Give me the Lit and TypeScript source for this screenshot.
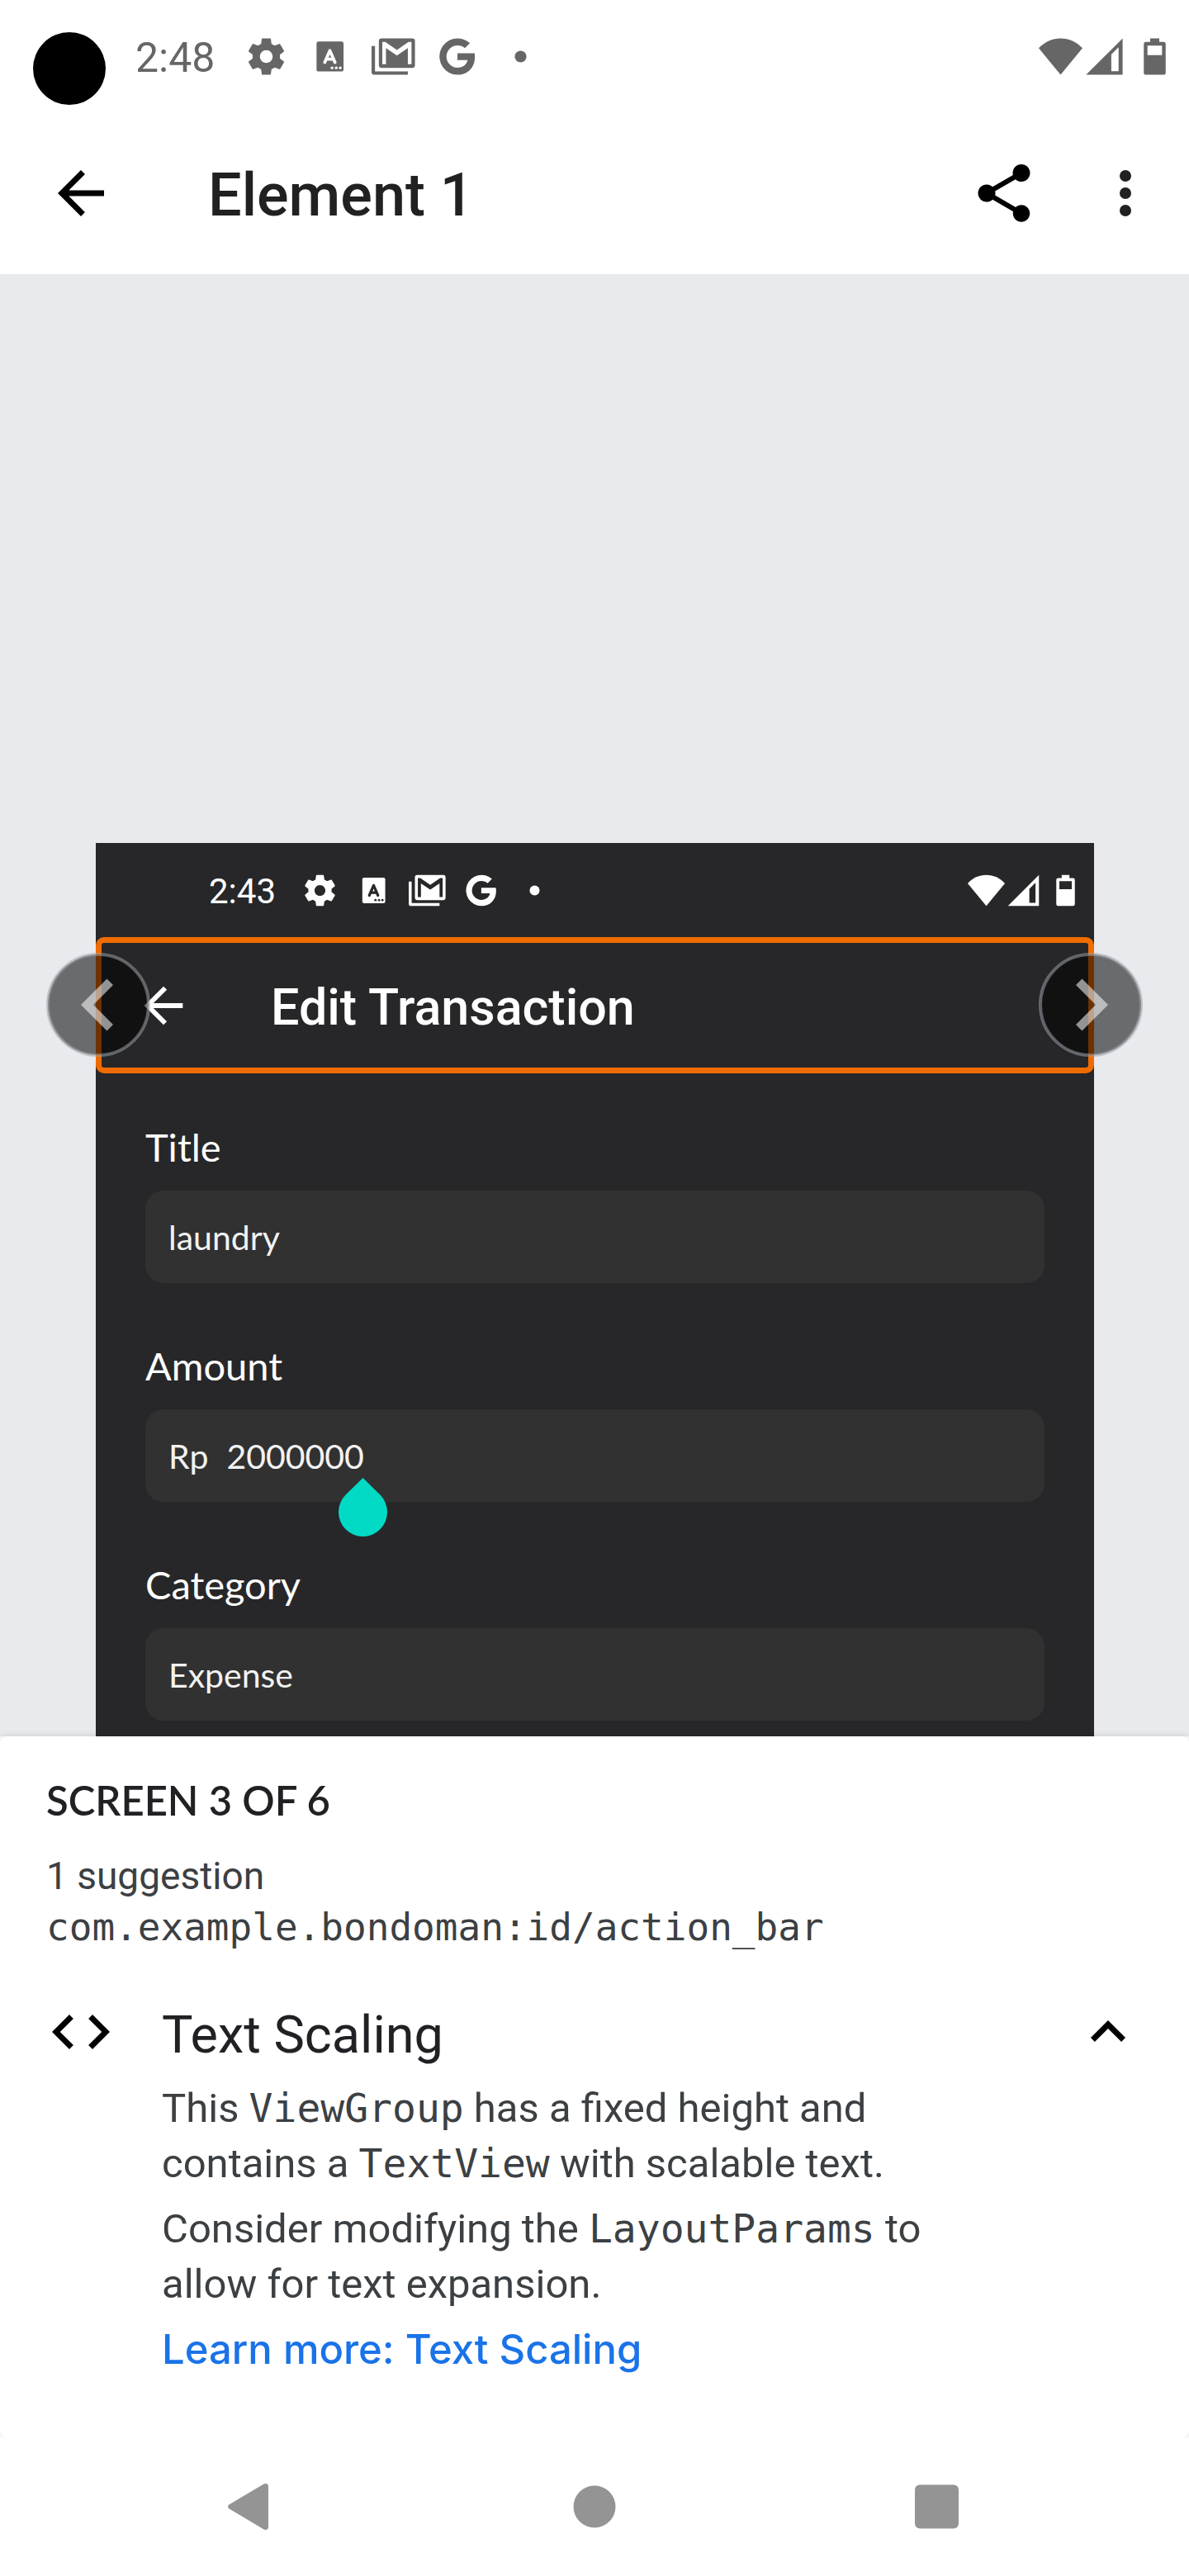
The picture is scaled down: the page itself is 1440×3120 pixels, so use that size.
import { LitElement, html, svg, css } from "lit";
import { customElement, property, state } from "lit/decorators.js";

const icons = {
  back: svg`<path d="M20 11H7.83l5.59-5.59L12 4l-8 8 8 8 1.41-1.41L7.83 13H20z"/>`,
  share: svg`<path d="M18 16.08c-.76 0-1.44.3-1.96.77L8.91 12.7c.05-.23.09-.46.09-.7s-.04-.47-.09-.7l7.05-4.11c.54.5 1.25.81 2.04.81 1.66 0 3-1.34 3-3s-1.34-3-3-3-3 1.34-3 3c0 .24.04.47.09.7L8.04 9.81C7.5 9.31 6.79 9 6 9c-1.66 0-3 1.34-3 3s1.34 3 3 3c.79 0 1.5-.31 2.04-.81l7.12 4.16c-.05.21-.08.43-.08.65 0 1.61 1.31 2.92 2.92 2.92s2.92-1.31 2.92-2.92-1.31-2.92-2.92-2.92z"/>`,
  more: svg`<circle cx="12" cy="6" r="2"/><circle cx="12" cy="12" r="2"/><circle cx="12" cy="18" r="2"/>`,
  code: svg`<path d="M9.4 16.6 4.8 12l4.6-4.6L8 6l-6 6 6 6zM14.6 16.6l4.6-4.6-4.6-4.6L16 6l6 6-6 6z"/>`,
  less: svg`<path d="M12 8l-6 6 1.41 1.41L12 10.83l4.59 4.58L18 14z"/>`,
  expand: svg`<path d="M16.59 8.59 12 13.17 7.41 8.59 6 10l6 6 6-6z"/>`,
  settings: svg`<path d="M19.43 12.98c.04-.32.07-.64.07-.98s-.03-.66-.07-.98l2.11-1.65c.19-.15.24-.42.12-.64l-2-3.46c-.12-.22-.39-.3-.61-.22l-2.49 1c-.52-.4-1.08-.73-1.69-.98l-.38-2.65C14.46 2.18 14.25 2 14 2h-4c-.25 0-.46.18-.49.42l-.38 2.65c-.61.25-1.17.59-1.69.98l-2.49-1c-.23-.09-.49 0-.61.22l-2 3.46c-.13.22-.07.49.12.64l2.11 1.65c-.04.32-.07.65-.07.98s.03.66.07.98l-2.11 1.65c-.19.15-.24.42-.12.64l2 3.46c.12.22.39.3.61.22l2.49-1c.52.4 1.08.73 1.69.98l.38 2.65c.03.24.24.42.49.42h4c.25 0 .46-.18.49-.42l.38-2.65c.61-.25 1.17-.59 1.69-.98l2.49 1c.23.09.49 0 .61-.22l2-3.46c.12-.22.07-.49-.12-.64zM12 15.5c-1.93 0-3.5-1.57-3.5-3.5s1.57-3.5 3.5-3.5 3.5 1.57 3.5 3.5-1.57 3.5-3.5 3.5z"/>`,
  keyboard: svg`<rect x="4.700" y="3.700" width="14.800" height="16.500" rx="1.200"/><path class="cut-line" d="M9.200 15.200 12 8.700l2.800 6.500M10.200 13.400h3.600"/><g class="cut"><circle cx="13.200" cy="18.200" r=".75"/><circle cx="15.500" cy="18.200" r=".75"/><circle cx="17.700" cy="18.200" r=".75"/></g>`,
  mail: svg`<path fill-rule="evenodd" d="M5.500 2h16.800A1.500 1.500 0 0 1 23.800 3.500v13.200a1.500 1.500 0 0 1-1.500 1.500H5.500A1.500 1.500 0 0 1 4 16.700V3.500A1.500 1.500 0 0 1 5.500 2zM5.900 4v12.200h2V7.400l6 4 6-4v8.800h2V4h-1.600l-6.400 4.400L7.500 4z"/><path d="M0 6.200h1.900v13.900h18V22H1.500A1.500 1.500 0 0 1 0 20.500z"/>`,
  google: svg`<path d="M12.200 10.200v3.700h5.600c-.5 2.500-2.600 4.200-5.500 4.200a6.100 6.100 0 1 1 0-12.200c1.500 0 2.900.5 4 1.500l2.800-2.800A10 10 0 1 0 12.200 22c5.800 0 9.600-4.100 9.600-9.800 0-.7-.1-1.400-.2-2z"/>`,
  dot: svg`<circle cx="12" cy="12" r="3.200"/>`,
  wifi: svg`<path d="M0 7.400C3.300 3.900 7.400 2 12 2s8.700 1.900 12 5.400L12 22z"/>`,
  signal: svg`<path fill-rule="evenodd" d="M2 22 22 2v20zM15.800 10.900V20h4V6.900z"/>`,
  battery: svg`<path fill-rule="evenodd" d="M9.500 2h5v2h2.300A1.200 1.200 0 0 1 18 5.200v15.600a1.200 1.200 0 0 1-1.200 1.200H7.200A1.200 1.200 0 0 1 6 20.800V5.200A1.200 1.200 0 0 1 7.200 4h2.300zM8 6v5.200h8V6z"/>`,
};

type IconName = keyof typeof icons;

@customElement("ui-icon")
class UiIcon extends LitElement {
  @property() name: IconName = "dot";

  static styles = css`
    :host {
      display: block;
      flex: none;
      width: var(--icon-size, 84px);
      height: var(--icon-size, 84px);
    }
    svg {
      display: block;
      width: 100%;
      height: 100%;
      fill: currentColor;
    }
    .cut {
      fill: var(--icon-cut, #fff);
    }
    .cut-line {
      fill: none;
      stroke: var(--icon-cut, #fff);
      stroke-width: 1.7px;
      stroke-linecap: round;
      stroke-linejoin: round;
    }
  `;

  render() {
    return html`<svg viewBox="0 0 24 24" aria-hidden="true">${icons[this.name]}</svg>`;
  }
}

@customElement("status-icons")
class StatusIcons extends LitElement {
  @property() time = "";

  static styles = css`
    :host {
      display: flex;
      flex: 1;
      align-items: center;
      line-height: 1;
    }
    .time {
      padding-top: 4px;
    }
    .notes {
      display: flex;
      gap: var(--note-gap, 24px);
      margin-left: var(--time-gap, 36px);
    }
    .system {
      display: flex;
      margin-left: auto;
    }
    .system ui-icon:last-child {
      margin-left: var(--battery-gap, 8px);
    }
  `;

  render() {
    const notes: IconName[] = ["settings", "keyboard", "mail", "google", "dot"];
    const system: IconName[] = ["wifi", "signal", "battery"];
    return html`
      <span class="time">${this.time}</span>
      <div class="notes">${notes.map((n) => html`<ui-icon name=${n}></ui-icon>`)}</div>
      <div class="system">${system.map((n) => html`<ui-icon name=${n}></ui-icon>`)}</div>
    `;
  }
}

@customElement("transaction-preview")
class TransactionPreview extends LitElement {
  static styles = css`
    :host {
      display: block;
      color: #fff;
      background: #272729;
    }
    .status {
      display: flex;
      height: 114px;
      padding: 0 12px 0 137px;
      font-size: 42px;
      --icon-size: 45px;
      --icon-cut: #272729;
      --note-gap: 20px;
      --time-gap: 31px;
      --battery-gap: 6px;
    }
    .bar {
      display: flex;
      align-items: center;
      gap: 95px;
      height: 165px;
      box-sizing: border-box;
      padding-left: 40px;
      border: 7px solid #f06c00;
      border-radius: 10px;
      --icon-size: 70px;
    }
    .back {
      padding: 0;
      border: 0;
      background: none;
      color: inherit;
    }
    h2 {
      margin: 0;
      padding-top: 4px;
      font-size: 61px;
      font-weight: 500;
      line-height: 70px;
    }
    form {
      display: flex;
      flex-direction: column;
      gap: 73px;
      padding: 62px 60px 19px;
      font-family: Lato, "Liberation Sans", sans-serif;
    }
    .row {
      display: flex;
      flex-direction: column;
      gap: 26px;
    }
    label {
      font-size: 47px;
      line-height: 54px;
    }
    .field {
      display: flex;
      align-items: center;
      gap: 22px;
      position: relative;
      height: 112px;
      box-sizing: border-box;
      padding: 0 28px;
      border-radius: 22px;
      background: #313131;
      color: #f2f2f2;
      font-size: 41px;
    }
    input,
    select {
      flex: 1;
      min-width: 0;
      height: 60px;
      padding: 0;
      border: 0;
      outline: 0;
      appearance: none;
      background: none;
      color: inherit;
      font: inherit;
    }
    .handle {
      position: absolute;
      left: 234px;
      top: 83px;
      width: 59px;
      height: 71px;
      fill: #03dac5;
      z-index: 1;
    }
  `;

  render() {
    return html`
      <div class="status"><status-icons time="2:43"></status-icons></div>
      <div class="bar">
        <button class="back" aria-label="Navigate up"><ui-icon name="back"></ui-icon></button>
        <h2>Edit Transaction</h2>
      </div>
      <form>
        <div class="row">
          <label for="title">Title</label>
          <div class="field"><input id="title" .value=${"laundry"} /></div>
        </div>
        <div class="row">
          <label for="amount">Amount</label>
          <div class="field">
            <span>Rp</span>
            <input id="amount" inputmode="numeric" .value=${"2000000"} />
            <svg class="handle" viewBox="0 0 59 71" aria-hidden="true">
              <path d="M29.500 0 50.400 20.600A29.500 29.500 0 1 1 8.600 20.600z" />
            </svg>
          </div>
        </div>
        <div class="row">
          <label for="category">Category</label>
          <div class="field">
            <select id="category">
              <option>Expense</option>
              <option>Income</option>
            </select>
          </div>
        </div>
      </form>
    `;
  }
}

@customElement("app-root")
class AppRoot extends LitElement {
  @state() private open = true;

  static styles = css`
    :host {
      display: flex;
      flex-direction: column;
      min-height: 100vh;
      background: #fff;
      color: #202124;
      font-family: Roboto, "Liberation Sans", sans-serif;
    }
    button {
      display: block;
      padding: 0;
      border: 0;
      background: none;
      color: #000;
      cursor: pointer;
    }
    .status {
      display: flex;
      height: 136px;
      padding: 0 15px 0 40px;
      color: #666;
      font-size: 50px;
      --icon-size: 53px;
    }
    .camera {
      flex: none;
      width: 88px;
      height: 88px;
      margin: 39px 36px 0 0;
      border-radius: 50%;
      background: #000;
    }
    .appbar {
      display: flex;
      align-items: center;
      height: 196px;
      padding: 0 35px 0 56px;
    }
    .appbar h1 {
      flex: 1;
      margin: 0 0 0 112px;
      padding-top: 6px;
      font-size: 72px;
      font-weight: 500;
      line-height: 84px;
      color: #212121;
    }
    .appbar .more {
      margin-left: 63px;
      color: #212121;
    }
    .stage {
      position: relative;
      padding: 689px 115px 0 116px;
      background: #e8eaed;
    }
    .step {
      position: absolute;
      top: 822px;
      width: 126px;
      height: 126px;
    }
    .step svg {
      display: block;
      width: 100%;
      height: 100%;
    }
    .prev {
      left: 56px;
    }
    .next {
      right: 56px;
    }
    .disc {
      fill: rgba(0, 0, 0, 0.54);
      stroke: rgba(154, 160, 166, 0.55);
      stroke-width: 4px;
    }
    .chevron {
      fill: rgba(255, 255, 255, 0.55);
    }
    .sheet {
      position: relative;
      flex: 1;
      padding: 48px 56px 60px;
      border-radius: 8px;
      background: #fff;
      box-shadow: 0 0 8px rgba(0, 0, 0, 0.15);
      color: #3c4043;
    }
    .count {
      margin: 0;
      color: #202124;
      font-family: Lato, "Liberation Sans", sans-serif;
      font-size: 49px;
      font-weight: 600;
      line-height: 58px;
    }
    .summary {
      margin: 32px 0 0;
      font-size: 46px;
      line-height: 62px;
    }
    code {
      font-family: "DejaVu Sans Mono", "Liberation Mono", monospace;
      font-size: 48px;
      line-height: 1;
    }
    .summary code {
      display: block;
      font-size: 46px;
      line-height: 62px;
    }
    .finding {
      display: grid;
      grid-template-columns: 84px 1fr 84px;
      align-items: start;
      column-gap: 56px;
      margin-top: 54px;
      --icon-size: 84px;
    }
    .mark {
      color: #000;
    }
    .finding h3 {
      margin: 0;
      color: #202124;
      font-size: 63px;
      font-weight: 400;
      line-height: 92px;
    }
    .detail {
      grid-column: 2;
      margin-top: 9px;
      padding-right: 120px;
      font-size: 49px;
      line-height: 67px;
    }
    .detail p {
      margin: 0 0 12px;
    }
    .detail a {
      color: #1a73e8;
      font-family: Inter, "Liberation Sans", sans-serif;
      font-weight: 500;
      text-decoration: none;
    }
    .nav {
      position: relative;
      display: grid;
      grid-template-columns: repeat(3, 1fr);
      justify-items: center;
      align-items: center;
      height: 168px;
      padding: 0 96px;
      background: #fff;
    }
    .nav button {
      width: 84px;
      height: 84px;
    }
    .nav svg {
      display: block;
      width: 100%;
      height: 100%;
      fill: #949494;
    }
  `;

  render() {
    return html`
      <div class="status">
        <div class="camera"></div>
        <status-icons time="2:48"></status-icons>
      </div>
      <header class="appbar">
        <button aria-label="Back"><ui-icon name="back"></ui-icon></button>
        <h1>Element 1</h1>
        <button aria-label="Share"><ui-icon name="share"></ui-icon></button>
        <button class="more" aria-label="More options"><ui-icon name="more"></ui-icon></button>
      </header>
      <main class="stage">
        <transaction-preview></transaction-preview>
        <button class="step prev" aria-label="Previous">
          <svg viewBox="0 0 126 126">
            <circle class="disc" cx="63" cy="63" r="61" />
            <path class="chevron" d="M81 39 73.500 31.500 42 63l31.500 31.500L81 87 57 63z" />
          </svg>
        </button>
        <button class="step next" aria-label="Next">
          <svg viewBox="0 0 126 126">
            <circle class="disc" cx="63" cy="63" r="61" />
            <path class="chevron" d="M45 39l7.500-7.500L84 63 52.500 94.500 45 87l24-24z" />
          </svg>
        </button>
      </main>
      <section class="sheet">
        <h2 class="count">SCREEN 3 OF 6</h2>
        <p class="summary">1 suggestion<code>com.example.bondoman:id/action_bar</code></p>
        <div class="finding">
          <ui-icon class="mark" name="code"></ui-icon>
          <h3>Text Scaling</h3>
          <button aria-label="Toggle details" aria-expanded=${this.open} @click=${() => (this.open = !this.open)}>
            <ui-icon name=${this.open ? "less" : "expand"}></ui-icon>
          </button>
          ${this.open
            ? html`<div class="detail">
                <p>This <code>ViewGroup</code> has a fixed height and contains a <code>TextView</code> with scalable text.</p>
                <p>Consider modifying the <code>LayoutParams</code> to allow for text expansion.</p>
                <a href="#text-scaling">Learn more: Text Scaling</a>
              </div>`
            : null}
        </div>
      </section>
      <nav class="nav">
        <button aria-label="Back">
          <svg viewBox="0 0 84 84"><path d="M15.500 39.500 57.500 14.500q5-2 5.500 3v49q-.5 5-5.500 3L15.500 44.500q-3-2.500 0-5z" /></svg>
        </button>
        <button aria-label="Home"><svg viewBox="0 0 84 84"><circle cx="42" cy="42" r="25.500" /></svg></button>
        <button aria-label="Recent apps">
          <svg viewBox="0 0 84 84"><rect x="14" y="15.500" width="53" height="53" rx="6" /></svg>
        </button>
      </nav>
    `;
  }
}
